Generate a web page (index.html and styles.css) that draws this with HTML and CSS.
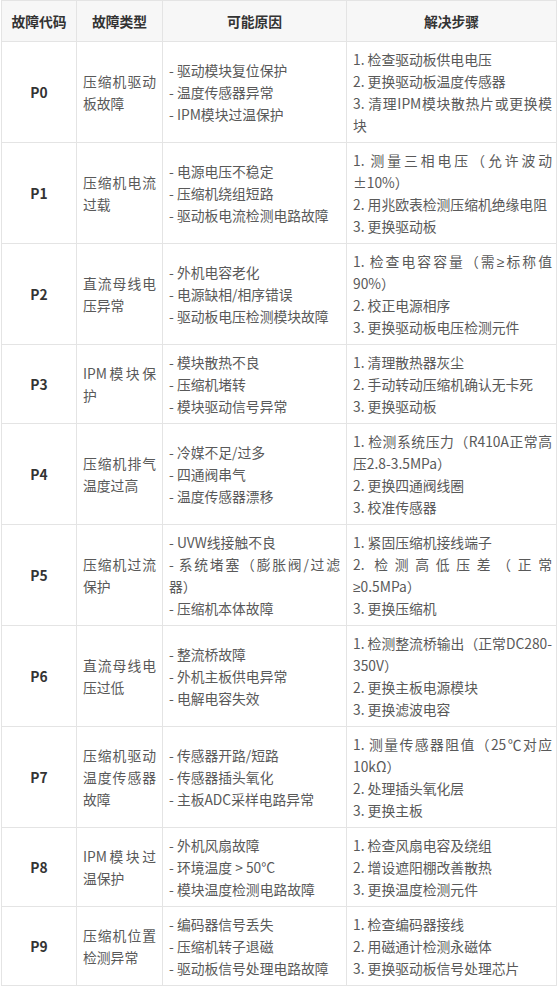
FILE: index.html
```html
<!DOCTYPE html>
<html lang="zh-CN">
<head>
<meta charset="utf-8">
<link rel="stylesheet" href="styles.css">
</head>
<body>
<div class="wrap">
<table class="fault-table">
<colgroup>
<col class="c-code"><col class="c-type"><col class="c-cause"><col class="c-step">
</colgroup>
<thead>
<tr><th>故障代码</th><th>故障类型</th><th>可能原因</th><th>解决步骤</th></tr>
</thead>
<tbody>
<tr><td class="code">P0</td><td class="type">压缩机驱动板故障</td><td class="cause">- 驱动模块复位保护<br>- 温度传感器异常<br>- IPM模块过温保护</td><td class="step"><p>1. 检查驱动板供电电压</p><p>2. 更换驱动板温度传感器</p><p>3. 清理IPM模块散热片或更换模块</p></td></tr>
<tr><td class="code">P1</td><td class="type">压缩机电流过载</td><td class="cause">- 电源电压不稳定<br>- 压缩机绕组短路<br>- 驱动板电流检测电路故障</td><td class="step"><p>1. 测量三相电压（允许波动±10%）</p><p>2. 用兆欧表检测压缩机绝缘电阻</p><p>3. 更换驱动板</p></td></tr>
<tr><td class="code">P2</td><td class="type">直流母线电压异常</td><td class="cause">- 外机电容老化<br>- 电源缺相/相序错误<br>- 驱动板电压检测模块故障</td><td class="step"><p>1. 检查电容容量（需<span class="sym">≥</span>标称值90%）</p><p>2. 校正电源相序</p><p>3. 更换驱动板电压检测元件</p></td></tr>
<tr><td class="code">P3</td><td class="type">IPM模块保护</td><td class="cause">- 模块散热不良<br>- 压缩机堵转<br>- 模块驱动信号异常</td><td class="step"><p>1. 清理散热器灰尘</p><p>2. 手动转动压缩机确认无卡死</p><p>3. 更换驱动板</p></td></tr>
<tr><td class="code">P4</td><td class="type">压缩机排气温度过高</td><td class="cause">- 冷媒不足/过多<br>- 四通阀串气<br>- 温度传感器漂移</td><td class="step"><p>1. 检测系统压力（R410A正常高压2.8-3.5MPa）</p><p>2. 更换四通阀线圈</p><p>3. 校准传感器</p></td></tr>
<tr><td class="code">P5</td><td class="type">压缩机过流保护</td><td class="cause"><p>- UVW线接触不良</p><p>- 系统堵塞（膨胀阀/过滤器）</p><p>- 压缩机本体故障</p></td><td class="step"><p>1. 紧固压缩机接线端子</p><p>2. 检测高低压差（正常<span class="sym">≥</span>0.5MPa）</p><p>3. 更换压缩机</p></td></tr>
<tr><td class="code">P6</td><td class="type">直流母线电压过低</td><td class="cause">- 整流桥故障<br>- 外机主板供电异常<br>- 电解电容失效</td><td class="step"><p>1. 检测整流桥输出（正常DC280-350V）</p><p>2. 更换主板电源模块</p><p>3. 更换滤波电容</p></td></tr>
<tr><td class="code">P7</td><td class="type">压缩机驱动温度传感器故障</td><td class="cause">- 传感器开路/短路<br>- 传感器插头氧化<br>- 主板ADC采样电路异常</td><td class="step"><p>1. 测量传感器阻值（25℃对应10kΩ）</p><p>2. 处理插头氧化层</p><p>3. 更换主板</p></td></tr>
<tr><td class="code">P8</td><td class="type">IPM模块过温保护</td><td class="cause">- 外机风扇故障<br>- 环境温度 &gt; 50°C<br>- 模块温度检测电路故障</td><td class="step"><p>1. 检查风扇电容及绕组</p><p>2. 增设遮阳棚改善散热</p><p>3. 更换温度检测元件</p></td></tr>
<tr><td class="code">P9</td><td class="type">压缩机位置检测异常</td><td class="cause">- 编码器信号丢失<br>- 压缩机转子退磁<br>- 驱动板信号处理电路故障</td><td class="step"><p>1. 检查编码器接线</p><p>2. 用磁通计检测永磁体</p><p>3. 更换驱动板信号处理芯片</p></td></tr>
</tbody>
</table>
</div>
</body>
</html>
```

FILE: styles.css
```css
html, body {
  margin: 0;
  padding: 0;
  background: #ffffff;
}
.wrap {
  padding: 0 1px;
}
.fault-table {
  width: 555px;
  border-collapse: collapse;
  table-layout: fixed;
  font-family: "Noto Sans CJK SC", sans-serif;
  font-size: 13.8px;
  line-height: 22px;
  color: #595959;
}
.c-code { width: 75px; }
.c-type { width: 86px; }
.c-cause { width: 184px; }
.c-step { width: 210px; }
.fault-table th,
.fault-table td {
  border: 1px solid #e4e4e4;
  padding: 6px;
  vertical-align: middle;
}
.fault-table th {
  background: #f7f7f7;
  color: #333333;
  font-weight: bold;
  text-align: center;
  padding: 9px 6px;
}
.fault-table td {
  text-align: justify;
}
.fault-table td.step {
  padding: 6px 4px 6px 6px;
}
.fault-table td.code {
  text-align: center;
  font-weight: bold;
  color: #333333;
}
.fault-table p {
  margin: 0;
}
.sym {
  font-family: "Noto Sans", sans-serif;
  line-height: 1;
}
```
